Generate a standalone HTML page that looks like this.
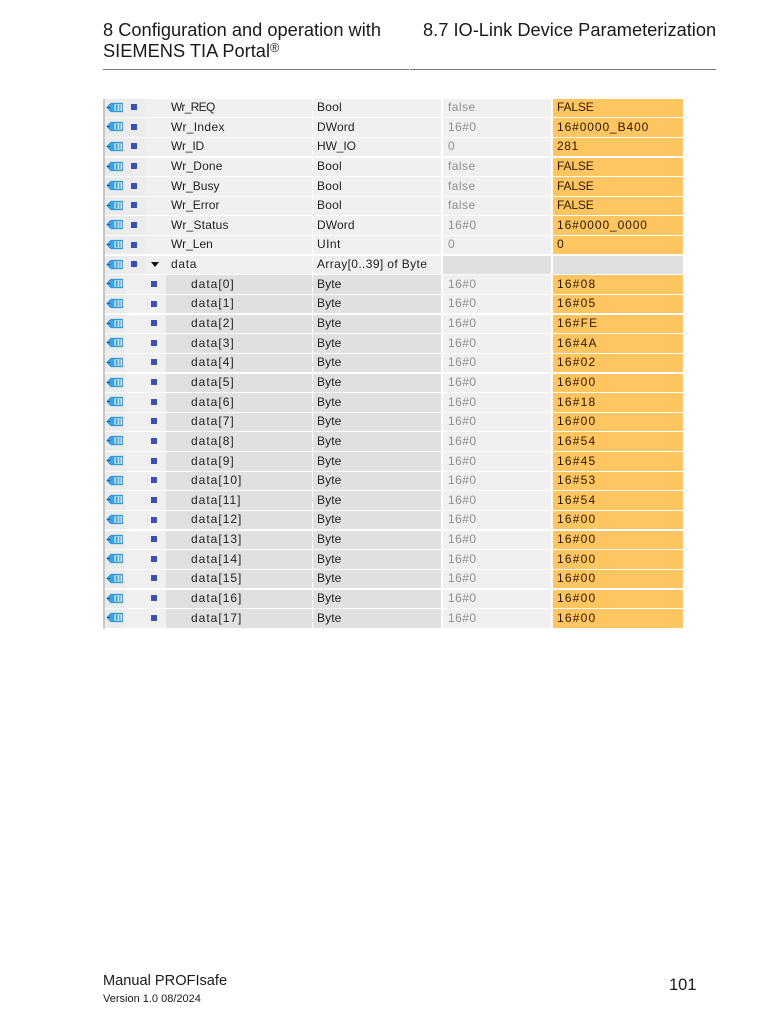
<!DOCTYPE html>
<html>
<head>
<meta charset="utf-8">
<style>
html,body{margin:0;padding:0;background:#fff}
body{width:768px;height:1024px;position:relative;overflow:hidden;font-family:"Liberation Sans",sans-serif;color:#1a1a1a}
.t{position:absolute;white-space:nowrap}
#tb{position:absolute;left:103px;top:98.6px;width:580px;font-size:12px;color:#1f1f1f}
.r{position:relative;height:19.654px}
.r>*{position:absolute}
.r>b{top:0;height:18.4px;font-weight:normal;background:#f0f0f0}
.r::before{content:"";position:absolute;left:2px;top:0;width:20px;height:18.4px;background:#ebebeb}
.r:nth-child(-n+9)::after{content:"";position:absolute;left:22px;top:0;width:20px;height:18.4px;background:#ececec}
.a{left:0;width:2px;background:#c6c6c6!important;height:19.654px!important}
.c1{left:22px;width:41px}
.c2{left:63px;width:146px}
.c3{left:210px;width:128px}
.c4{left:340px;width:108px}
.c5{left:450px;width:130px;background:#ffc561!important}
.d{background:#e0e0e0!important}
.n,.y,.f,.v{top:.4px;line-height:16px;white-space:nowrap}
.n{left:68px}.y{left:214px;letter-spacing:.1px}.f{left:345px;color:#8f8f8f;letter-spacing:.45px}.v{left:454px;color:#2b1a00;letter-spacing:1.2px}
.dn{left:88px;letter-spacing:1px}
svg.i{left:3px;top:3px;width:17px;height:11px;z-index:1}
.s{top:5.5px;width:6px;height:6px;background:#3a50b4;z-index:1}
.s1{left:28px}.s2{left:48px}
.tri{left:48px;top:6px;width:0;height:0;border-left:4.5px solid transparent;border-right:4.5px solid transparent;border-top:5px solid #111;z-index:1}
</style>
</head>
<body>
<div class="t" style="left:103px;top:19px;font-size:18.25px;line-height:21px">8 Configuration and operation with</div>
<div class="t" style="left:103px;top:40px;font-size:18.25px;line-height:21px">SIEMENS TIA Portal<sup style="font-size:12.5px;line-height:0;vertical-align:5px">®</sup></div>
<div class="t" style="left:423px;top:19px;font-size:18.25px;line-height:21px">8.7 IO-Link Device Parameterization</div>
<div class="t" style="left:103px;top:69px;width:306px;height:1px;background:#777"></div>
<div class="t" style="left:410px;top:69px;width:306px;height:1px;background:#777"></div>

<svg width="0" height="0" style="position:absolute"><symbol id="ic" viewBox="0 0 17 11"><path d="M0.8 5.5 L5 1.2 H16.5 V9.8 H5 Z" fill="#3ba4e2" stroke="#2a86c4" stroke-width=".7"/><path d="M1 5.5H4.5" stroke="#1a6a9e" stroke-width="1"/><rect x="8.5" y="2.5" width="7.5" height="6" fill="#e6f6fd"/><rect x="9.7" y="3" width="2" height="5" fill="#3a96d6"/><rect x="13.2" y="3" width="1.4" height="5" fill="#3a96d6"/></symbol></svg>

<div id="tb">
<div class="r"><b class="a"></b><b class="c1"></b><b class="c2"></b><b class="c3"></b><b class="c4"></b><b class="c5"></b><svg class="i"><use href="#ic"/></svg><i class="s s1"></i><span class="n" style="letter-spacing:-.7px">Wr_REQ</span><span class="y" style="letter-spacing:.2px">Bool</span><span class="f">false</span><span class="v" style="letter-spacing:-.15px">FALSE</span></div>
<div class="r"><b class="a"></b><b class="c1"></b><b class="c2"></b><b class="c3"></b><b class="c4"></b><b class="c5"></b><svg class="i"><use href="#ic"/></svg><i class="s s1"></i><span class="n" style="letter-spacing:.33px">Wr_Index</span><span class="y">DWord</span><span class="f">16#0</span><span class="v" style="letter-spacing:.9px">16#0000_B400</span></div>
<div class="r"><b class="a"></b><b class="c1"></b><b class="c2"></b><b class="c3"></b><b class="c4"></b><b class="c5"></b><svg class="i"><use href="#ic"/></svg><i class="s s1"></i><span class="n" style="letter-spacing:-.15px">Wr_ID</span><span class="y" style="letter-spacing:-.1px">HW_IO</span><span class="f">0</span><span class="v" style="letter-spacing:.6px">281</span></div>
<div class="r"><b class="a"></b><b class="c1"></b><b class="c2"></b><b class="c3"></b><b class="c4"></b><b class="c5"></b><svg class="i"><use href="#ic"/></svg><i class="s s1"></i><span class="n" style="letter-spacing:.16px">Wr_Done</span><span class="y" style="letter-spacing:.2px">Bool</span><span class="f">false</span><span class="v" style="letter-spacing:-.15px">FALSE</span></div>
<div class="r"><b class="a"></b><b class="c1"></b><b class="c2"></b><b class="c3"></b><b class="c4"></b><b class="c5"></b><svg class="i"><use href="#ic"/></svg><i class="s s1"></i><span class="n">Wr_Busy</span><span class="y" style="letter-spacing:.2px">Bool</span><span class="f">false</span><span class="v" style="letter-spacing:-.15px">FALSE</span></div>
<div class="r"><b class="a"></b><b class="c1"></b><b class="c2"></b><b class="c3"></b><b class="c4"></b><b class="c5"></b><svg class="i"><use href="#ic"/></svg><i class="s s1"></i><span class="n">Wr_Error</span><span class="y" style="letter-spacing:.2px">Bool</span><span class="f">false</span><span class="v" style="letter-spacing:-.15px">FALSE</span></div>
<div class="r"><b class="a"></b><b class="c1"></b><b class="c2"></b><b class="c3"></b><b class="c4"></b><b class="c5"></b><svg class="i"><use href="#ic"/></svg><i class="s s1"></i><span class="n" style="letter-spacing:.22px">Wr_Status</span><span class="y">DWord</span><span class="f">16#0</span><span class="v" style="letter-spacing:.9px">16#0000_0000</span></div>
<div class="r"><b class="a"></b><b class="c1"></b><b class="c2"></b><b class="c3"></b><b class="c4"></b><b class="c5"></b><svg class="i"><use href="#ic"/></svg><i class="s s1"></i><span class="n">Wr_Len</span><span class="y" style="letter-spacing:.45px">UInt</span><span class="f">0</span><span class="v">0</span></div>
<div class="r"><b class="a"></b><b class="c1"></b><b class="c2"></b><b class="c3"></b><b class="c4 d"></b><b class="c5 d"></b><svg class="i"><use href="#ic"/></svg><i class="s s1"></i><i class="tri"></i><span class="n" style="letter-spacing:.7px">data</span><span class="y" style="letter-spacing:.38px">Array[0..39] of Byte</span></div>
<div class="r"><b class="a"></b><b class="c1"></b><b class="c2 d"></b><b class="c3 d"></b><b class="c4"></b><b class="c5"></b><svg class="i"><use href="#ic"/></svg><i class="s s2"></i><span class="n dn">data[0]</span><span class="y">Byte</span><span class="f">16#0</span><span class="v">16#08</span></div>
<div class="r"><b class="a"></b><b class="c1"></b><b class="c2 d"></b><b class="c3 d"></b><b class="c4"></b><b class="c5"></b><svg class="i"><use href="#ic"/></svg><i class="s s2"></i><span class="n dn">data[1]</span><span class="y">Byte</span><span class="f">16#0</span><span class="v">16#05</span></div>
<div class="r"><b class="a"></b><b class="c1"></b><b class="c2 d"></b><b class="c3 d"></b><b class="c4"></b><b class="c5"></b><svg class="i"><use href="#ic"/></svg><i class="s s2"></i><span class="n dn">data[2]</span><span class="y">Byte</span><span class="f">16#0</span><span class="v">16#FE</span></div>
<div class="r"><b class="a"></b><b class="c1"></b><b class="c2 d"></b><b class="c3 d"></b><b class="c4"></b><b class="c5"></b><svg class="i"><use href="#ic"/></svg><i class="s s2"></i><span class="n dn">data[3]</span><span class="y">Byte</span><span class="f">16#0</span><span class="v">16#4A</span></div>
<div class="r"><b class="a"></b><b class="c1"></b><b class="c2 d"></b><b class="c3 d"></b><b class="c4"></b><b class="c5"></b><svg class="i"><use href="#ic"/></svg><i class="s s2"></i><span class="n dn">data[4]</span><span class="y">Byte</span><span class="f">16#0</span><span class="v">16#02</span></div>
<div class="r"><b class="a"></b><b class="c1"></b><b class="c2 d"></b><b class="c3 d"></b><b class="c4"></b><b class="c5"></b><svg class="i"><use href="#ic"/></svg><i class="s s2"></i><span class="n dn">data[5]</span><span class="y">Byte</span><span class="f">16#0</span><span class="v">16#00</span></div>
<div class="r"><b class="a"></b><b class="c1"></b><b class="c2 d"></b><b class="c3 d"></b><b class="c4"></b><b class="c5"></b><svg class="i"><use href="#ic"/></svg><i class="s s2"></i><span class="n dn">data[6]</span><span class="y">Byte</span><span class="f">16#0</span><span class="v">16#18</span></div>
<div class="r"><b class="a"></b><b class="c1"></b><b class="c2 d"></b><b class="c3 d"></b><b class="c4"></b><b class="c5"></b><svg class="i"><use href="#ic"/></svg><i class="s s2"></i><span class="n dn">data[7]</span><span class="y">Byte</span><span class="f">16#0</span><span class="v">16#00</span></div>
<div class="r"><b class="a"></b><b class="c1"></b><b class="c2 d"></b><b class="c3 d"></b><b class="c4"></b><b class="c5"></b><svg class="i"><use href="#ic"/></svg><i class="s s2"></i><span class="n dn">data[8]</span><span class="y">Byte</span><span class="f">16#0</span><span class="v">16#54</span></div>
<div class="r"><b class="a"></b><b class="c1"></b><b class="c2 d"></b><b class="c3 d"></b><b class="c4"></b><b class="c5"></b><svg class="i"><use href="#ic"/></svg><i class="s s2"></i><span class="n dn">data[9]</span><span class="y">Byte</span><span class="f">16#0</span><span class="v">16#45</span></div>
<div class="r"><b class="a"></b><b class="c1"></b><b class="c2 d"></b><b class="c3 d"></b><b class="c4"></b><b class="c5"></b><svg class="i"><use href="#ic"/></svg><i class="s s2"></i><span class="n dn">data[10]</span><span class="y">Byte</span><span class="f">16#0</span><span class="v">16#53</span></div>
<div class="r"><b class="a"></b><b class="c1"></b><b class="c2 d"></b><b class="c3 d"></b><b class="c4"></b><b class="c5"></b><svg class="i"><use href="#ic"/></svg><i class="s s2"></i><span class="n dn">data[11]</span><span class="y">Byte</span><span class="f">16#0</span><span class="v">16#54</span></div>
<div class="r"><b class="a"></b><b class="c1"></b><b class="c2 d"></b><b class="c3 d"></b><b class="c4"></b><b class="c5"></b><svg class="i"><use href="#ic"/></svg><i class="s s2"></i><span class="n dn">data[12]</span><span class="y">Byte</span><span class="f">16#0</span><span class="v">16#00</span></div>
<div class="r"><b class="a"></b><b class="c1"></b><b class="c2 d"></b><b class="c3 d"></b><b class="c4"></b><b class="c5"></b><svg class="i"><use href="#ic"/></svg><i class="s s2"></i><span class="n dn">data[13]</span><span class="y">Byte</span><span class="f">16#0</span><span class="v">16#00</span></div>
<div class="r"><b class="a"></b><b class="c1"></b><b class="c2 d"></b><b class="c3 d"></b><b class="c4"></b><b class="c5"></b><svg class="i"><use href="#ic"/></svg><i class="s s2"></i><span class="n dn">data[14]</span><span class="y">Byte</span><span class="f">16#0</span><span class="v">16#00</span></div>
<div class="r"><b class="a"></b><b class="c1"></b><b class="c2 d"></b><b class="c3 d"></b><b class="c4"></b><b class="c5"></b><svg class="i"><use href="#ic"/></svg><i class="s s2"></i><span class="n dn">data[15]</span><span class="y">Byte</span><span class="f">16#0</span><span class="v">16#00</span></div>
<div class="r"><b class="a"></b><b class="c1"></b><b class="c2 d"></b><b class="c3 d"></b><b class="c4"></b><b class="c5"></b><svg class="i"><use href="#ic"/></svg><i class="s s2"></i><span class="n dn">data[16]</span><span class="y">Byte</span><span class="f">16#0</span><span class="v">16#00</span></div>
<div class="r"><b class="a"></b><b class="c1"></b><b class="c2 d"></b><b class="c3 d"></b><b class="c4"></b><b class="c5"></b><svg class="i"><use href="#ic"/></svg><i class="s s2"></i><span class="n dn">data[17]</span><span class="y">Byte</span><span class="f">16#0</span><span class="v">16#00</span></div>
</div>

<div class="t" style="left:103px;top:973px;font-size:14.6px;line-height:17px">Manual PROFIsafe</div>
<div class="t" style="left:103px;top:993px;font-size:11px;line-height:13px">Version 1.0 08/2024</div>
<div class="t" style="left:669px;top:975px;font-size:16.5px;line-height:21px">101</div>
</body>
</html>
